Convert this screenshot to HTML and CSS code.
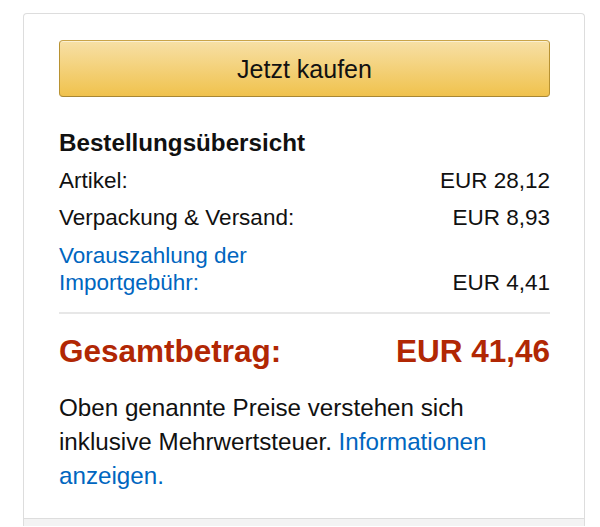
FILE: index.html
```html
<!DOCTYPE html>
<html lang="de">
<head>
<meta charset="utf-8">
<link rel="stylesheet" href="styles.css">
</head>
<body>
<div class="box">
  <div class="inner">
    <button class="buy">Jetzt kaufen</button>
    <h5 class="title">Bestellungsübersicht</h5>
    <div class="row"><span>Artikel:</span><span>EUR 28,12</span></div>
    <div class="row"><span>Verpackung &amp; Versand:</span><span>EUR 8,93</span></div>
    <div class="row import"><a class="link">Vorauszahlung der<br>Importgebühr:</a><span>EUR 4,41</span></div>
    <hr class="divider">
    <div class="total"><span>Gesamtbetrag:</span><span>EUR 41,46</span></div>
    <p class="note">Oben genannte Preise verstehen sich inklusive Mehrwertsteuer. <a class="link">Informationen anzeigen.</a></p>
  </div>
  <div class="footer"></div>
</div>
</body>
</html>
```
FILE: styles.css
```css
html, body {
  margin: 0;
  padding: 0;
  background: #fff;
}
body {
  font-family: "Liberation Sans", Arial, sans-serif;
  color: #111;
  padding: 13px 0 0 23px;
}
.box {
  width: 560px;
  border: 1px solid #ddd;
  border-bottom: 0;
  border-radius: 4px 4px 0 0;
  overflow: hidden;
}
.inner {
  padding: 26px 34px 25px 35px;
}
.buy {
  display: block;
  width: 100%;
  height: 57px;
  margin: 0;
  border: 1px solid;
  border-color: #c9a449 #b89232 #a88734;
  border-radius: 4px;
  background: linear-gradient(to bottom, #f7e0a6, #f0c24d);
  box-shadow: inset 0 1px 0 rgba(255,255,255,0.5);
  font-family: "Liberation Sans", Arial, sans-serif;
  font-size: 25px;
  color: #111;
  padding: 1px 0 0;
}
.title {
  margin: 32px 0 0;
  font-size: 24.2px;
  font-weight: bold;
  line-height: 28px;
}
.row {
  display: flex;
  justify-content: space-between;
  align-items: flex-end;
  font-size: 22.5px;
  line-height: 26px;
  margin-top: 11px;
}
.row.import {
  margin-top: 11px;
  line-height: 27px;
}
.link {
  color: #0066c0;
  text-decoration: none;
}
.divider {
  border: 0;
  border-top: 2px solid #e7e7e7;
  margin: 16px 0 0;
}
.total {
  display: flex;
  justify-content: space-between;
  font-size: 31.5px;
  font-weight: bold;
  color: #b12704;
  line-height: 36px;
  margin-top: 19px;
}
.note {
  margin: 22px 0 0;
  font-size: 24.2px;
  line-height: 34px;
}
.footer {
  height: 7px;
  border-top: 1px solid #ddd;
  background: #f3f3f3;
}
```
